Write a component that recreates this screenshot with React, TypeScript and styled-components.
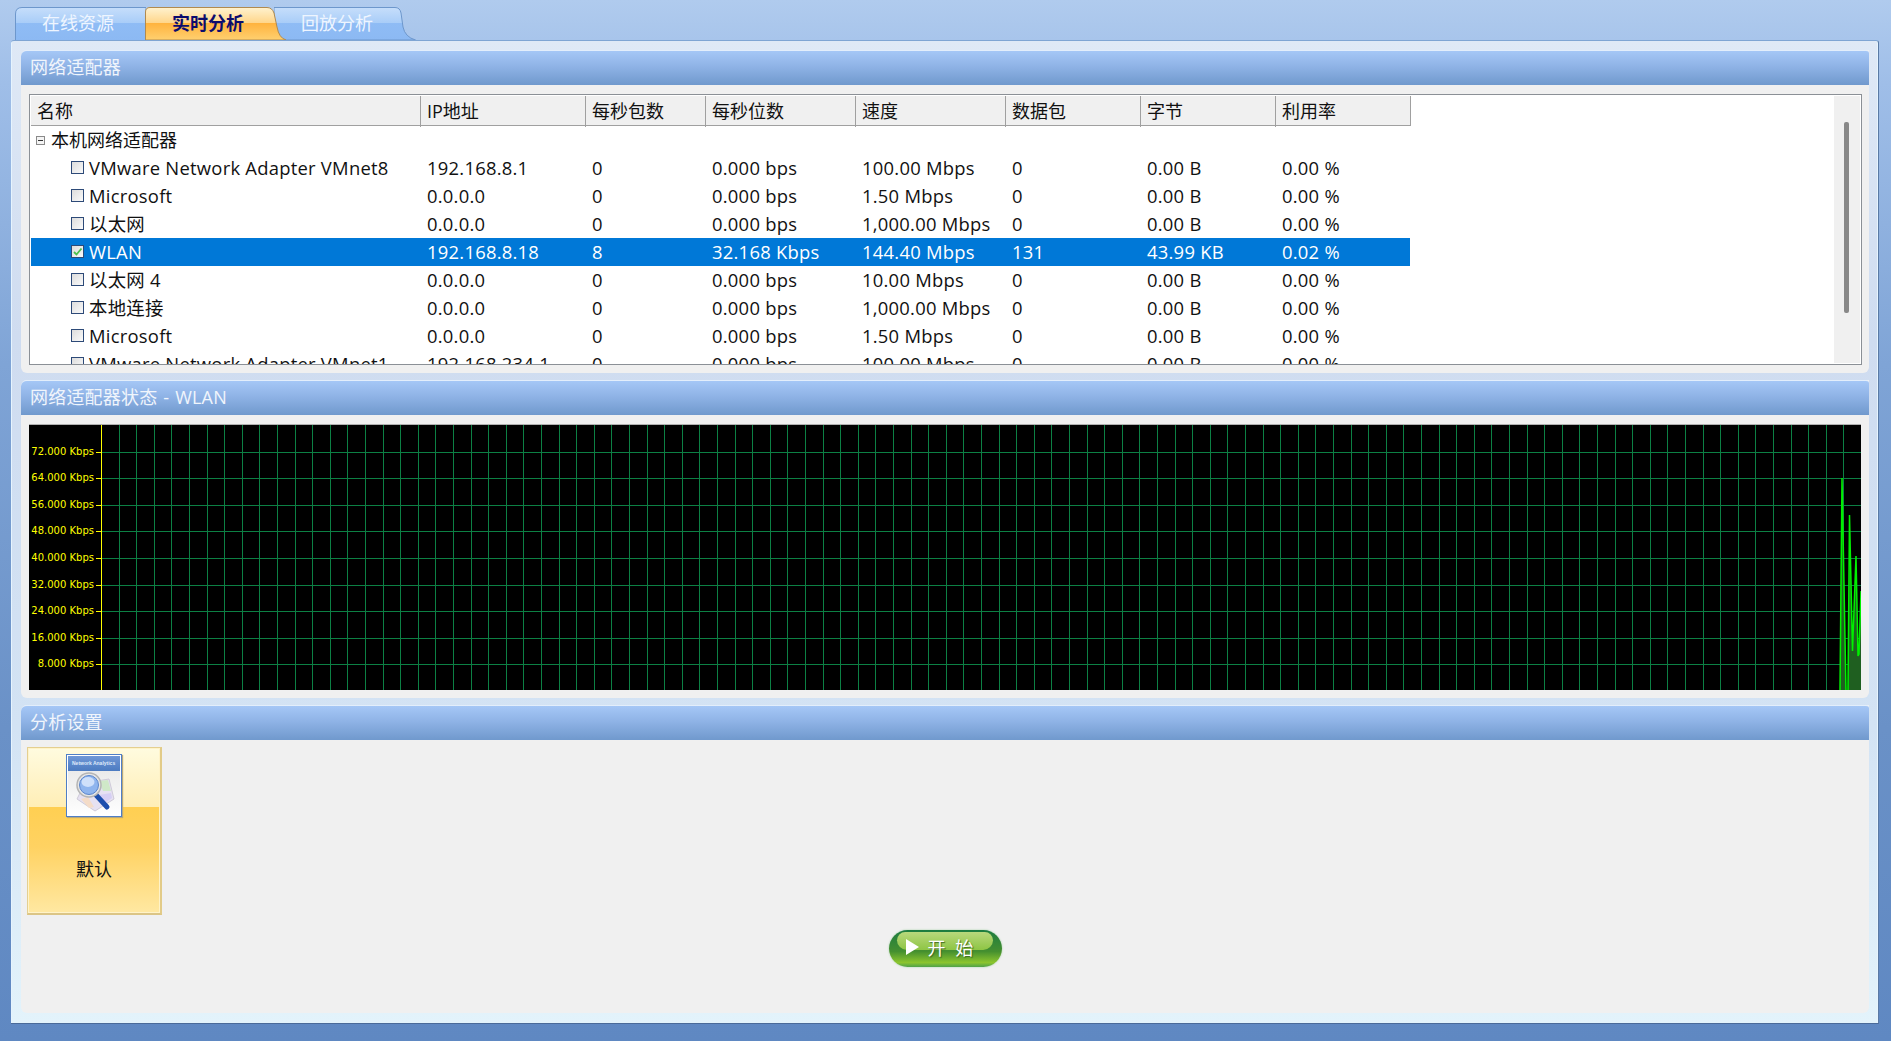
import * as React from 'react';
import styled, { createGlobalStyle } from 'styled-components';

const GlobalStyle = createGlobalStyle`
    html, body {
        margin: 0;
        padding: 0;
        overflow: hidden;
    }
    body {
        font-family: "Open Sans", "Noto Sans CJK SC", sans-serif;
        font-size: 18px;
    }
`;

const COLUMNS = '389px 165px 120px 150px 150px 135px 135px 136px';

const Page = styled.div`
    width: 1891px;
    height: 1041px;
    box-sizing: border-box;
    padding: 7px 12px 17px 11px;
    display: flex;
    flex-direction: column;
    background: linear-gradient(180deg, #b0cbee 0%, #9fbee8 8%, #7fa4d6 35%, #6a91c7 70%, #5f88c2 100%);
`;

const TabBar = styled.div`
    display: flex;
    height: 33px;
    padding-left: 4px;
    flex: none;
`;

const Tab = styled.div<{ $width: number; $overlap: number; $active?: boolean }>`
    position: relative;
    width: ${p => p.$width}px;
    height: 33px;
    margin-left: ${p => -p.$overlap}px;
    z-index: ${p => (p.$active ? 2 : 1)};
    padding-left: 27px;
    box-sizing: border-box;
    color: ${p => (p.$active ? '#0c0c6e' : '#eef5ff')};
    font-weight: ${p => (p.$active ? 700 : 400)};
    font-size: 18px;
    line-height: 32px;
`;

const TabShape = styled.svg`
    position: absolute;
    left: 0;
    top: 0;
`;

const TabLabel = styled.span`
    position: relative;
`;

const Main = styled.div`
    flex: 1;
    display: flex;
    flex-direction: column;
    gap: 7px;
    padding: 9px 9px 10px 10px;
    border-radius: 3px 3px 0 0;
    border-top: 1px solid #7fa5d3;
    border-right: 1px solid #5a7aa5;
    border-bottom: 1px solid #4a6a99;
    background: linear-gradient(180deg, #dfe9f6 0%, #cfdcf0 30%, #d3e3f4 70%, #e3f3fb 100%);
    box-shadow: inset 1px 0 0 #e6f4fe, inset -1px 0 0 #e6f4fe;
`;

const Panel = styled.section<{ $height: number }>`
    height: ${p => p.$height}px;
    display: flex;
    flex-direction: column;
    flex: none;
    background: #f0f0f0;
    border-radius: 6px 0 6px 6px;
`;

const PanelHeader = styled.header`
    height: 35px;
    flex: none;
    box-sizing: border-box;
    padding-left: 9px;
    line-height: 33px;
    color: #f0f5fc;
    font-size: 18px;
    letter-spacing: 0.2px;
    word-spacing: 1px;
    border-radius: 6px 3px 0 0;
    border-top: 1px solid #e3eefb;
    background: linear-gradient(180deg, #a5c7f6 0%, #8fb3e6 45%, #7099cd 100%);
`;

const PanelBody = styled.div`
    flex: 1;
    min-height: 0;
    padding: 9px 8px 8px;
`;

const AdapterTable = styled.div`
    position: relative;
    height: 271px;
    margin-right: -1px;
    box-sizing: border-box;
    padding: 1px;
    border: 1px solid #8b9096;
    background: #fff;
    overflow: hidden;
    color: #111;
`;

const HeaderRow = styled.div`
    display: grid;
    grid-template-columns: ${COLUMNS};
    width: 1380px;
    height: 30px;
    box-sizing: border-box;
    background: #f0f0f0;
    border-bottom: 1px solid #a0a0a0;
    border-right: 1px solid #a0a0a0;
`;

const HeaderCell = styled.div`
    padding-left: 6px;
    line-height: 31px;
    border-left: 1px solid #a0a0a0;

    &:first-child {
        border-left: 0;
    }
`;

const Row = styled.div<{ $selected?: boolean }>`
    display: grid;
    grid-template-columns: ${COLUMNS};
    width: 1379px;
    height: 28px;
    line-height: 28px;
    font-size: 18.4px;
    letter-spacing: 0.25px;
    background: ${p => (p.$selected ? '#0078d7' : 'transparent')};
    color: ${p => (p.$selected ? '#fff' : '#111')};
`;

const NameCell = styled.div`
    display: flex;
    align-items: center;
    padding-left: 40px;
    gap: 5px;
    white-space: nowrap;
`;

const Cell = styled.div`
    padding-left: 7px;
    white-space: nowrap;
`;

const GroupRow = styled.div`
    display: flex;
    align-items: center;
    height: 28px;
    line-height: 27px;
    padding-left: 5px;
    gap: 6px;
`;

const Expander = styled.span`
    position: relative;
    width: 9px;
    height: 9px;
    box-sizing: border-box;
    border: 1px solid #8a8a8a;
    background: #f4f4f4;
    flex: none;

    &::after {
        content: '';
        position: absolute;
        left: 1px;
        right: 1px;
        top: 3px;
        height: 1px;
        background: #333;
    }
`;

const CheckBox = styled.span`
    display: inline-flex;
    width: 13px;
    height: 13px;
    margin-top: -2px;
    box-sizing: border-box;
    border: 1px solid #2d4a78;
    background: linear-gradient(135deg, #dcdcdc, #fafafa);
    flex: none;
`;

const ScrollGutter = styled.div`
    position: absolute;
    top: 1px;
    bottom: 1px;
    right: 1px;
    width: 26px;
    background: #f0f0f0;
`;

const ScrollThumb = styled.div`
    position: absolute;
    top: 26px;
    left: 10px;
    width: 5px;
    height: 191px;
    border-radius: 2px;
    background: #888;
`;

const Chart = styled.svg`
    display: block;
    border-top: 1px solid #b0b0b0;
    box-sizing: border-box;
`;

const AnalysisBody = styled.div`
    position: relative;
    flex: 1;
    padding: 7px 6px;
`;

const ProfileCard = styled.div`
    width: 135px;
    height: 168px;
    box-sizing: border-box;
    display: flex;
    flex-direction: column;
    align-items: center;
    padding: 6px 0 0;
    border: 1px solid #e4cf90;
    border-right: 2px solid #e2cb88;
    border-bottom: 2px solid #dcc585;
    box-shadow: inset 0 0 0 1px #fff3c8;
    background: linear-gradient(180deg, #fffbdf 0%, #ffeeb6 36%, #ffcf52 36%, #ffd262 60%, #ffe8a2 100%);
    color: #111;
`;

const Thumbnail = styled.div`
    width: 56px;
    height: 63px;
    box-sizing: border-box;
    flex: none;
    border: 1px solid #4f7ec6;
    background: linear-gradient(180deg, #e4e4e4 0%, #fff 100%);
    box-shadow: 1px 1px 1px #b9a878, inset 0 0 0 1px #fff;
`;

const ThumbnailTitle = styled.div`
    height: 15px;
    margin: 1px 1px 0;
    padding-left: 4px;
    background: linear-gradient(180deg, #6f97d6, #4c7bc1);
    color: #dfe9fa;
    font-family: "Liberation Sans", sans-serif;
    font-size: 5px;
    font-weight: 700;
    line-height: 14px;
    white-space: nowrap;
`;

const ProfileName = styled.div`
    margin-top: 40px;
    line-height: 24px;
`;

const StartRow = styled.div`
    display: flex;
    justify-content: center;
    margin-top: 15px;
`;

const StartButton = styled.button`
    position: relative;
    display: flex;
    align-items: center;
    width: 113px;
    height: 37px;
    padding: 0 0 3px 17px;
    border: 0;
    border-radius: 19px;
    color: #fff;
    font: inherit;
    font-size: 18px;
    word-spacing: 5px;
    text-shadow: 1px 1px 1px #3d6a20;
    background: linear-gradient(180deg, #1c7c40 0%, #3f8c32 50%, #45902f 58%, #8cc52e 88%, #4fa24a 100%);
    box-shadow: 0 0 2px #9ccf9c;

    &::before {
        content: '';
        position: absolute;
        left: 8px;
        right: 9px;
        top: 2px;
        height: 18px;
        border-radius: 10px 10px 12px 12px;
        background: linear-gradient(180deg, #b8d87c, #8ec544);
    }
`;

const ButtonContent = styled.span`
    position: relative;
    display: flex;
    align-items: center;
    gap: 9px;
`;

const rows = [
    { name: 'VMware Network Adapter VMnet8', ip: '192.168.8.1', pps: '0', bps: '0.000 bps', speed: '100.00 Mbps', packets: '0', bytes: '0.00 B', usage: '0.00 %' },
    { name: 'Microsoft', ip: '0.0.0.0', pps: '0', bps: '0.000 bps', speed: '1.50 Mbps', packets: '0', bytes: '0.00 B', usage: '0.00 %' },
    { name: '以太网', ip: '0.0.0.0', pps: '0', bps: '0.000 bps', speed: '1,000.00 Mbps', packets: '0', bytes: '0.00 B', usage: '0.00 %' },
    { name: 'WLAN', ip: '192.168.8.18', pps: '8', bps: '32.168 Kbps', speed: '144.40 Mbps', packets: '131', bytes: '43.99 KB', usage: '0.02 %', selected: true },
    { name: '以太网 4', ip: '0.0.0.0', pps: '0', bps: '0.000 bps', speed: '10.00 Mbps', packets: '0', bytes: '0.00 B', usage: '0.00 %' },
    { name: '本地连接', ip: '0.0.0.0', pps: '0', bps: '0.000 bps', speed: '1,000.00 Mbps', packets: '0', bytes: '0.00 B', usage: '0.00 %' },
    { name: 'Microsoft', ip: '0.0.0.0', pps: '0', bps: '0.000 bps', speed: '1.50 Mbps', packets: '0', bytes: '0.00 B', usage: '0.00 %' },
    { name: 'VMware Network Adapter VMnet1', ip: '192.168.234.1', pps: '0', bps: '0.000 bps', speed: '100.00 Mbps', packets: '0', bytes: '0.00 B', usage: '0.00 %' },
];

const headers = ['名称', 'IP地址', '每秒包数', '每秒位数', '速度', '数据包', '字节', '利用率'];

const gridYs = [27, 53, 80, 106, 133, 160, 186, 213, 239];
const gridLabels = ['72.000', '64.000', '56.000', '48.000', '40.000', '32.000', '24.000', '16.000', '8.000'];
const gridXs = Array.from({ length: 100 }, (_, i) => Math.round(72 + i * 17.6) + 0.5);

const TrafficChart = () => (
    <Chart width={1832} height={266}>
        <rect width={1832} height={266} fill="#000" />
        {gridXs.map(x => (
            <line key={x} x1={x} x2={x} y1={0} y2={266} stroke="#0c8044" />
        ))}
        {gridYs.map((y, i) => (
            <g key={y}>
                <line x1={72} x2={1832} y1={y + 0.5} y2={y + 0.5} stroke="#0c8044" />
                <line x1={67} x2={72} y1={y + 0.5} y2={y + 0.5} stroke="#ffff00" />
                <text x={65} y={y + 3} textAnchor="end" fill="#ffff00" fontFamily="'DejaVu Sans', sans-serif" fontSize={10}>
                    {gridLabels[i]} Kbps
                </text>
            </g>
        ))}
        <line x1={72.5} x2={72.5} y1={0} y2={266} stroke="#ffff00" />
        <path d="M1811 266 L1813 53 L1817 266 Z M1819 266 L1820.5 90 L1823.5 226 L1827 131 L1829 231 L1830 229 L1832 166 V266 Z" fill="#1f5f20" />
        <polyline
            points="1811,266 1813,53 1817,266 1819,266 1820.5,90 1823.5,226 1827,131 1829,231 1830,229 1832,166"
            fill="none"
            stroke="#00f000"
            strokeWidth={1.5}
        />
    </Chart>
);

const CheckMark = () => (
    <svg width={11} height={11} viewBox="0 0 11 11">
        <path d="M2 6 L4.5 8.5 L9.5 2.5" fill="none" stroke="#4cc04c" strokeWidth={1.8} />
    </svg>
);

const AnalyticsIcon = () => (
    <svg width={46} height={42} viewBox="0 0 46 42" style={{ display: 'block', margin: '0 auto' }}>
        <path d="M6 28 L14 12 L38 8 L43 28 L24 40 Z" fill="#e6e1f2" stroke="#cfcbd8" />
        <path d="M28 10 L37 9 L40 20 L32 20 Z" fill="#cfe8c8" />
        <path d="M10 28 L17 26 L23 36 L18 37 Z" fill="#f4dcc8" />
        <path d="M28 24 L40 22 L41 27 L32 33 Z" fill="#d6cff4" />
        <path d="M25 24 L36 36" stroke="#1d4fae" strokeWidth={5} strokeLinecap="round" />
        <circle cx={18} cy={14} r={12} fill="#e6e6e6" stroke="#b4b4b4" strokeWidth={1.5} />
        <circle cx={18} cy={14} r={9.5} fill="#8fb5ee" stroke="#5a85cc" />
        <ellipse cx={17} cy={11} rx={6.5} ry={5} fill="#cfe0fa" />
    </svg>
);

type TabSpec = { label: string; width: number; overlap: number; active?: boolean; path: string };

const tabs: TabSpec[] = [
    { label: '在线资源', width: 131, overlap: 0, path: 'M.5 33V7Q.5.5 7 .5H131V33' },
    { label: '实时分析', width: 141, overlap: 1, active: true, path: 'M.5 33V5Q.5.5 5 .5H122Q127 .5 129 6L132 20Q134 31 141 33Z' },
    { label: '回放分析', width: 142, overlap: 12, path: 'M0 33V.5H121Q126 .5 127 6L129 20Q131 30 141.5 33Z' },
];

export default function App() {
    return (
        <Page>
            <GlobalStyle />
            <TabBar>
                {tabs.map(tab => (
                    <Tab key={tab.label} $width={tab.width} $overlap={tab.overlap} $active={tab.active}>
                        <TabShape width={tab.width} height={33}>
                            <defs>
                                <linearGradient id={`tab-${tab.width}`} x1="0" x2="0" y1="0" y2="1">
                                    {tab.active ? (
                                        <>
                                            <stop offset="0" stopColor="#fff2cf" />
                                            <stop offset="0.47" stopColor="#ffd68a" />
                                            <stop offset="0.47" stopColor="#ffb23c" />
                                            <stop offset="1" stopColor="#ffd070" />
                                        </>
                                    ) : (
                                        <>
                                            <stop offset="0" stopColor="#c6defb" />
                                            <stop offset="0.47" stopColor="#a9cdf8" />
                                            <stop offset="0.47" stopColor="#8fbcf5" />
                                            <stop offset="1" stopColor="#8cb9f3" />
                                        </>
                                    )}
                                </linearGradient>
                            </defs>
                            <path d={tab.path} fill={`url(#tab-${tab.width})`} stroke={tab.active ? '#b08a50' : '#6d97cc'} />
                        </TabShape>
                        <TabLabel>{tab.label}</TabLabel>
                    </Tab>
                ))}
            </TabBar>
            <Main>
                <Panel $height={323}>
                    <PanelHeader>网络适配器</PanelHeader>
                    <PanelBody>
                        <AdapterTable>
                            <HeaderRow>
                                {headers.map(h => (
                                    <HeaderCell key={h}>{h}</HeaderCell>
                                ))}
                            </HeaderRow>
                            <GroupRow>
                                <Expander />
                                本机网络适配器
                            </GroupRow>
                            {rows.map((row, i) => (
                                <Row key={i} $selected={row.selected}>
                                    <NameCell>
                                        <CheckBox>{row.selected && <CheckMark />}</CheckBox>
                                        {row.name}
                                    </NameCell>
                                    <Cell>{row.ip}</Cell>
                                    <Cell>{row.pps}</Cell>
                                    <Cell>{row.bps}</Cell>
                                    <Cell>{row.speed}</Cell>
                                    <Cell>{row.packets}</Cell>
                                    <Cell>{row.bytes}</Cell>
                                    <Cell>{row.usage}</Cell>
                                </Row>
                            ))}
                            <ScrollGutter>
                                <ScrollThumb />
                            </ScrollGutter>
                        </AdapterTable>
                    </PanelBody>
                </Panel>
                <Panel $height={318}>
                    <PanelHeader>网络适配器状态 - WLAN</PanelHeader>
                    <PanelBody>
                        <TrafficChart />
                    </PanelBody>
                </Panel>
                <Panel $height={308}>
                    <PanelHeader>分析设置</PanelHeader>
                    <AnalysisBody>
                        <ProfileCard>
                            <Thumbnail>
                                <ThumbnailTitle>Network Analytics</ThumbnailTitle>
                                <AnalyticsIcon />
                            </Thumbnail>
                            <ProfileName>默认</ProfileName>
                        </ProfileCard>
                        <StartRow>
                            <StartButton>
                                <ButtonContent>
                                    <svg width={13} height={16} viewBox="0 0 13 16">
                                        <path d="M0 0 L13 8 L0 16 Z" fill="#fff" />
                                    </svg>
                                    开 始
                                </ButtonContent>
                            </StartButton>
                        </StartRow>
                    </AnalysisBody>
                </Panel>
            </Main>
        </Page>
    );
}
